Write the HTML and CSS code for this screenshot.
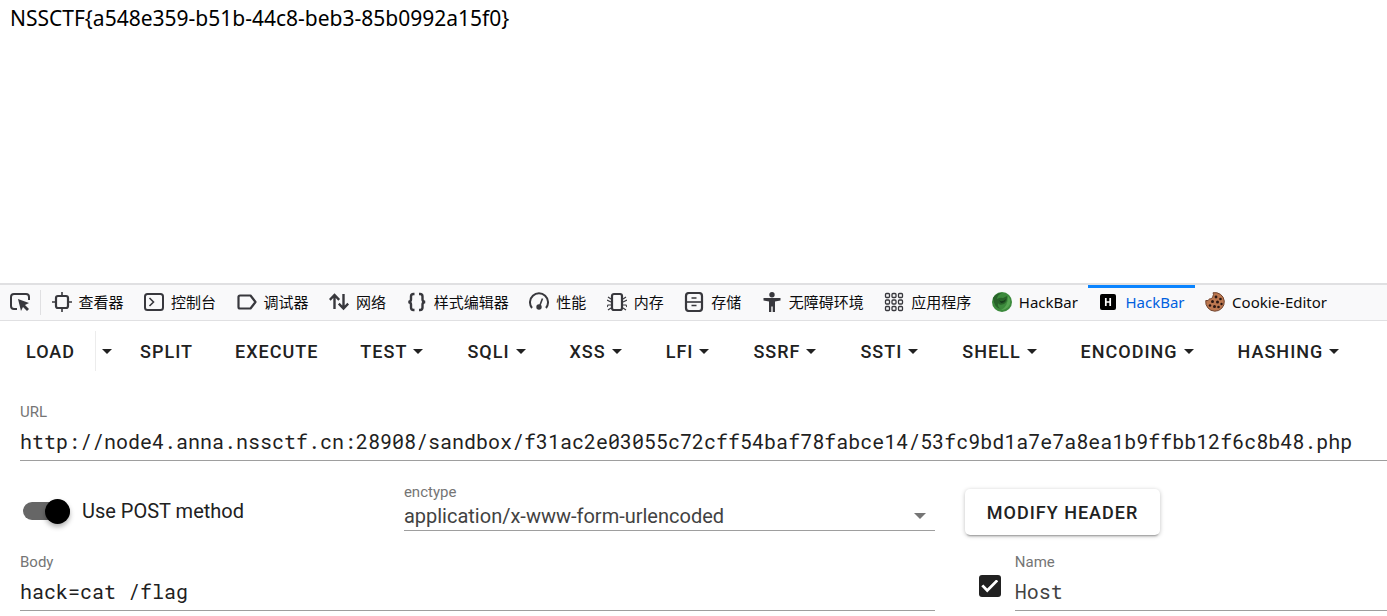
FILE: index.html
```html
<!DOCTYPE html>
<html lang="zh-CN">
<head>
  <meta charset="UTF-8" />
  <meta name="viewport" content="width=device-width, initial-scale=1.0"/>
  <title>HackBar</title>
  <link rel="stylesheet" href="styles.css">
</head>
<body>

  <main class="page">NSSCTF{a548e359-b51b-44c8-beb3-85b0992a15f0}</main>

  <section class="devtools">
    <nav class="toolbar">
      <button class="picker" aria-label="选取元素">
        <svg class="icon" viewBox="0 0 20 20"><path d="M7 17H4a3 3 0 0 1-3-3V5a3 3 0 0 1 3-3h12a3 3 0 0 1 3 3v3" fill="none" stroke="currentColor" stroke-width="2"/><path d="M8 7l11 4-4 2 4 4-2 2-4-4-2 4z" fill="currentColor"/></svg>
      </button>
      <button class="tab">
        <svg class="icon" viewBox="0 0 20 20" fill="none" stroke="currentColor"><rect x="4" y="4" width="12" height="12" rx="2" stroke-width="2.2"/><path d="M10 0v4M10 16v4M0 10h4M16 10h4" stroke-width="1.6"/></svg>
        查看器
      </button>
      <button class="tab">
        <svg class="icon" viewBox="0 0 20 20" fill="none" stroke="currentColor"><rect x="1" y="2" width="18" height="16" rx="2.5" stroke-width="2"/><path d="M5.5 6l4 4-4 4" stroke-width="1.6"/></svg>
        控制台
      </button>
      <button class="tab">
        <svg class="icon" viewBox="0 0 20 20" fill="none" stroke="currentColor" stroke-width="2.2" stroke-linejoin="round"><path d="M3 3.5h10.5L18.5 10l-5 6.5H3A1.5 1.5 0 0 1 1.5 15V5A1.5 1.5 0 0 1 3 3.5z"/></svg>
        调试器
      </button>
      <button class="tab">
        <svg class="icon" viewBox="0 0 20 20" fill="none" stroke="currentColor" stroke-width="2.4"><path d="M5.5 17V3M.8 7.8L5.500 3l4.700 4.800M14.500 2v14M9.800 11.700l4.700 4.800 4.700-4.800"/></svg>
        网络
      </button>
      <button class="tab">
        <svg class="icon" viewBox="0 0 20 20" fill="none" stroke="currentColor" stroke-width="2.4"><path d="M7.500 2H6.500Q4 2 4 4.500v3Q4 9.500 1.500 10 4 10.500 4 12.500v3Q4 18 6.500 18h1M12 2h1q2.500 0 2.500 2.500v3q0 2 2.500 2.500-2.500.5-2.500 2.500v3q0 2.500-2.500 2.500h-1"/></svg>
        样式编辑器
      </button>
      <button class="tab">
        <svg class="icon" viewBox="0 0 20 20"><path d="M3 16A9 9 0 1 1 17 16" fill="none" stroke="currentColor" stroke-width="2"/><path d="M13.500 6.500L11 13" stroke="currentColor" stroke-width="1.600"/><circle cx="10" cy="15" r="2.700" fill="currentColor"/></svg>
        性能
      </button>
      <button class="tab">
        <svg class="icon" viewBox="0 0 20 20" fill="none" stroke="currentColor"><rect x="5" y="2" width="10" height="16" rx="2" stroke-width="2.200"/><path d="M4 7L1 5M4 10L0 8M4 13H1l-1 2M4 16l-3 2M16 7l3-2M16 10l4-2M16 13h3l1 2M16 16l3 2" stroke-width="1.200"/></svg>
        内存
      </button>
      <button class="tab">
        <svg class="icon" viewBox="0 0 20 20" fill="none" stroke="currentColor"><rect x="2" y="1" width="16" height="18" rx="3" stroke-width="2.200"/><path d="M2 10h16" stroke-width="1.600"/><path d="M7.500 6h5M7.500 13.500h5" stroke-width="1.600"/></svg>
        存储
      </button>
      <button class="tab">
        <svg class="icon" viewBox="0 0 20 20" fill="currentColor"><circle cx="10" cy="2.700" r="2.700"/><path d="M1.500 6h17v2.500L13 9.500V20h-2.300v-5.500H9.300V20H7V9.500L1.500 8.500z"/></svg>
        无障碍环境
      </button>
      <button class="tab">
        <svg class="icon" viewBox="0 0 20 20" fill="none" stroke="currentColor" stroke-width="1.300"><rect x="1.500" y="1.500" width="4" height="4" rx="1"/><rect x="8" y="1.500" width="4" height="4" rx="1"/><rect x="14.500" y="1.500" width="4" height="4" rx="1"/><rect x="1.500" y="8" width="4" height="4" rx="1"/><rect x="8" y="8" width="4" height="4" rx="1"/><rect x="14.500" y="8" width="4" height="4" rx="1"/><rect x="1.500" y="14.500" width="4" height="4" rx="1"/><rect x="8" y="14.500" width="4" height="4" rx="1"/><rect x="14.500" y="14.500" width="4" height="4" rx="1"/></svg>
        应用程序
      </button>
      <button class="tab">
        <svg class="icon" viewBox="0 0 20 20"><circle cx="10" cy="10" r="10" fill="#3c8a3c"/><path d="M1 6q3-5 9-5-5 2-5 6 3-2 6-1l4-2q1 5-3 8-5 2-6-1-1 4 3 6-7-1-8-11z" fill="#286329"/><path d="M7 8q3 3 7-1-1 4-5 4z" fill="#153d1b"/><path d="M16 4q4 5 1 10-3 4-8 4 7-3 7-14z" fill="#56a552"/></svg>
        HackBar
      </button>
      <button class="tab active">
        <svg class="icon" viewBox="0 0 20 20"><rect x="2" y="2" width="16" height="16" rx="2" fill="#000"/><path d="M7.800 6v8M12.200 6v8M8 10h4" stroke="#fff" stroke-width="1.700"/></svg>
        HackBar
      </button>
      <button class="tab">
        <svg class="icon" viewBox="0 0 20 20"><path d="M8 .8A9.300 9.300 0 1 1 .8 8.500a2.800 2.800 0 0 0 3.700-1.700A3 3 0 0 0 8 4a3 3 0 0 0 0-3.200z" fill="#bd7850" stroke="#70432d"/><g fill="#2b1712"><circle cx="11" cy="5" r="1.400"/><circle cx="15.500" cy="7" r="1.300"/><circle cx="7.500" cy="9.500" r="1.500"/><circle cx="12.500" cy="10" r="1.500"/><circle cx="16.500" cy="12" r="1.200"/><circle cx="5" cy="13.500" r="1.300"/><circle cx="9.500" cy="14.500" r="1.500"/><circle cx="13.500" cy="15" r="1.300"/></g></svg>
        Cookie-Editor
      </button>
    </nav>

    <div class="menu">
      <div class="btn-group">
        <button class="menu-btn">LOAD</button>
        <button class="menu-btn split" aria-label="LOAD"><svg class="caret" viewBox="0 0 10 5"><path d="M0 0h10L5 5z"/></svg></button>
      </div>
      <button class="menu-btn">SPLIT</button>
      <button class="menu-btn">EXECUTE</button>
      <button class="menu-btn">TEST<svg class="caret" viewBox="0 0 10 5"><path d="M0 0h10L5 5z"/></svg></button>
      <button class="menu-btn">SQLI<svg class="caret" viewBox="0 0 10 5"><path d="M0 0h10L5 5z"/></svg></button>
      <button class="menu-btn">XSS<svg class="caret" viewBox="0 0 10 5"><path d="M0 0h10L5 5z"/></svg></button>
      <button class="menu-btn">LFI<svg class="caret" viewBox="0 0 10 5"><path d="M0 0h10L5 5z"/></svg></button>
      <button class="menu-btn">SSRF<svg class="caret" viewBox="0 0 10 5"><path d="M0 0h10L5 5z"/></svg></button>
      <button class="menu-btn">SSTI<svg class="caret" viewBox="0 0 10 5"><path d="M0 0h10L5 5z"/></svg></button>
      <button class="menu-btn">SHELL<svg class="caret" viewBox="0 0 10 5"><path d="M0 0h10L5 5z"/></svg></button>
      <button class="menu-btn">ENCODING<svg class="caret" viewBox="0 0 10 5"><path d="M0 0h10L5 5z"/></svg></button>
      <button class="menu-btn">HASHING<svg class="caret" viewBox="0 0 10 5"><path d="M0 0h10L5 5z"/></svg></button>
    </div>

    <form class="request">
      <div class="field url">
        <label for="url">URL</label>
        <input type="text" id="url" name="url" value="http://node4.anna.nssctf.cn:28908/sandbox/f31ac2e03055c72cff54baf78fabce14/53fc9bd1a7e7a8ea1b9ffbb12f6c8b48.php" />
      </div>

      <div class="options">
        <label class="switch" for="post">
          <input type="checkbox" id="post" name="post" checked />
          Use POST method
        </label>
        <div class="field enctype">
          <label for="enctype">enctype</label>
          <div class="select">
            <select id="enctype" name="enctype">
              <option>application/x-www-form-urlencoded</option>
            </select>
            <svg class="arrow" viewBox="0 0 12 6"><path d="M0 0h12L6 6z"/></svg>
          </div>
        </div>
      </div>
      <div class="actions">
        <button type="button" class="modify">MODIFY HEADER</button>
      </div>

      <div class="field">
        <label for="body">Body</label>
        <input type="text" id="body" name="body" value="hack=cat /flag" />
      </div>
      <div class="header-row">
        <input type="checkbox" class="check" id="enabled" aria-label="Host" checked />
        <div class="field name">
          <label for="name">Name</label>
          <input type="text" id="name" name="name" value="Host" />
        </div>
      </div>
    </form>
  </section>

</body>
</html>
```
FILE: styles.css
```css
* {
  box-sizing: border-box;
}

body {
  display: flex;
  flex-direction: column;
  min-height: 100vh;
  margin: 0;
  background: #fff;
  font-family: Roboto, "Noto Sans CJK SC", sans-serif;
  color: #212121;
}

button {
  padding: 0;
  border: none;
  background: none;
  color: inherit;
  font-family: inherit;
  cursor: pointer;
}

.page {
  flex: 1;
  padding: 4px 10px;
  font-family: "Noto Sans", "Noto Sans CJK SC", sans-serif;
  font-size: 21px;
  line-height: 28px;
  color: #000;
}

/* devtools tabs */
.toolbar {
  display: flex;
  justify-content: space-between;
  height: 38px;
  padding-right: 50px;
  border-top: 2px solid #e0e0e2;
  border-bottom: 1px solid #e0e0e2;
  background: #f9f9fa;
  overflow: hidden;
}

.icon {
  flex: none;
  width: 20px;
  height: 20px;
  color: #38383d;
}

.picker {
  display: flex;
  align-items: center;
  padding: 0 11px 2px 10px;
  background: linear-gradient(#e0e0e2, #e0e0e2) right center / 1px 25px no-repeat;
}

.tab {
  display: flex;
  align-items: center;
  gap: 7px;
  padding: 0 10px;
  border-top: 3px solid transparent;
  border-bottom: 5px solid transparent;
  font-family: "Noto Sans", "Noto Sans CJK SC", sans-serif;
  font-size: 15px;
  white-space: nowrap;
  color: #0c0c0d;
}

.tab.active {
  border-top-color: #0a84ff;
  color: #0060df;
}

/* hackbar menu */
.menu {
  display: flex;
  gap: 2px;
  height: 62px;
  padding: 10px 6px;
}

.btn-group {
  display: flex;
}

.menu-btn {
  display: flex;
  align-items: center;
  height: 40px;
  padding: 0 20px;
  font-size: 18px;
  font-weight: 500;
  letter-spacing: 1px;
  white-space: nowrap;
}

.caret {
  width: 10px;
  height: 5px;
  margin: 0 2px 0 6px;
  fill: currentColor;
}

.menu-btn.split {
  padding: 0 4px 0 0;
  border-left: 1px solid #ececec;
}

/* request form */
.request {
  display: grid;
  grid-template-columns: 13fr 6fr;
  column-gap: 30px;
  padding: 18px 0 5px 20px;
}

.field {
  display: flex;
  flex-direction: column;
  height: 60px;
  padding-top: 1px;
  border-bottom: 1px solid #9e9e9e;
}

.field label {
  font-size: 15px;
  line-height: 20px;
  color: #757575;
}

.field input,
.field select {
  width: 100%;
  height: 38px;
  padding: 0;
  border: none;
  outline: none;
  background: none;
  color: #212121;
  font-family: "Roboto Mono", "Liberation Mono", monospace;
  font-size: 20px;
}

.url {
  grid-column: 1 / -1;
}

.options {
  display: grid;
  grid-template-columns: 2fr 3fr;
  column-gap: 30px;
  height: 90px;
  padding-top: 20px;
}

.switch {
  display: flex;
  align-items: center;
  gap: 12px;
  height: 60px;
  padding-left: 3px;
  font-size: 20px;
}

.switch input {
  display: flex;
  align-items: center;
  justify-content: flex-end;
  appearance: none;
  width: 47px;
  height: 18px;
  margin: 0;
  border-radius: 9px;
  background: #666;
}

.switch input::before {
  content: "";
  width: 25px;
  height: 25px;
  border-radius: 50%;
  background: #000;
  box-shadow: 0 3px 5px rgba(0, 0, 0, 0.3);
}

.enctype {
  height: 50px;
}

.select {
  display: grid;
  align-items: center;
}

.select select,
.select .arrow {
  grid-area: 1 / 1;
}

.field .select select {
  appearance: none;
  height: 28px;
  font-family: inherit;
  color: #424242;
}

.arrow {
  justify-self: end;
  width: 12px;
  height: 6px;
  margin-right: 9px;
  fill: #757575;
  pointer-events: none;
}

.actions {
  padding-top: 28px;
}

.modify {
  height: 46px;
  padding: 0 22px;
  border-radius: 5px;
  box-shadow: 0 3px 2px -2px rgba(0, 0, 0, 0.3), 0 1px 4px rgba(0, 0, 0, 0.25);
  font-size: 18px;
  font-weight: 500;
  letter-spacing: 1px;
}

.header-row {
  display: flex;
  align-items: center;
  gap: 14px;
  padding-left: 14px;
}

.check {
  display: grid;
  place-items: center;
  appearance: none;
  flex: none;
  width: 22px;
  height: 22px;
  margin: 10px 0 0;
  border-radius: 3px;
  background: #212121;
}

.check::before {
  content: "";
  width: 17px;
  height: 13px;
  background: #fff;
  clip-path: polygon(0 52%, 12% 38%, 35% 70%, 88% 0, 100% 14%, 35% 100%);
}

.name {
  flex: 1;
}

.name input {
  color: #424242;
}
```
